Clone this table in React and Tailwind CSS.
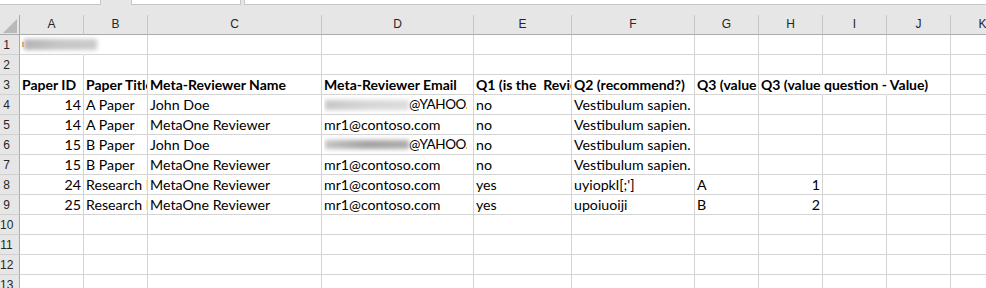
import React from "react";

const COLS = [
  { k: "A", w: "w-[64px]" },
  { k: "B", w: "w-[64px]" },
  { k: "C", w: "w-[174px]" },
  { k: "D", w: "w-[152px]" },
  { k: "E", w: "w-[98px]" },
  { k: "F", w: "w-[123px]" },
  { k: "G", w: "w-[64px]" },
  { k: "H", w: "w-[64px]" },
  { k: "I", w: "w-[64px]" },
  { k: "J", w: "w-[64px]" },
  { k: "K", w: "w-[64px]" },
];

function Blur({ w, tone }) {
  const cls =
    tone === "dark"
      ? "h-[9px] bg-gradient-to-r from-[#c4c4c4] via-[#a2a2a2] to-[#acacac]"
      : tone === "light"
      ? "h-[10px] bg-gradient-to-r from-[#c6c6c6] via-[#d6d6d6] to-[#dcdcdc]"
      : "h-[11px] bg-gradient-to-r from-[#b4b4b4] via-[#c6c6c6] to-[#cbcbcb]";
  return <div className={`${w} shrink-0 blur-[2px] ${cls}`} />;
}

function Cell({ w, children, right, bold, open, noRight }) {
  return (
    <div
      className={`${w} shrink-0 h-[20px] border-b border-r border-b-[#d4d4d4] ${
        noRight ? "border-r-white" : "border-r-[#d4d4d4]"
      } ${open ? "overflow-visible relative z-10" : "overflow-hidden"} whitespace-nowrap leading-[19px] ${
        right ? "text-right pr-[2px]" : "pl-[2px]"
      } ${bold ? "font-bold text-[14px]" : "text-[14.2px]"} text-black`}
    >
      {children}
    </div>
  );
}

const rows = [
  { n: 1, cells: { A: { open: true, noRight: true, v: "blob" } } },
  { n: 2, cells: {} },
  {
    n: 3,
    cells: {
      A: { bold: true, v: "Paper ID" },
      B: { bold: true, v: "Paper Title" },
      C: { bold: true, v: "Meta-Reviewer Name" },
      D: { bold: true, v: "Meta-Reviewer Email" },
      E: { bold: true, v: "Q1 (is the\u00a0\u00a0Reviewer)" },
      F: { bold: true, v: "Q2 (recommend?)" },
      G: { bold: true, v: "Q3 (value question)" },
      H: { bold: true, open: true, noRight: true, v: "Q3 (value question - Value)" },
      I: { noRight: true, v: "" },
    },
  },
  {
    n: 4,
    cells: {
      A: { right: true, v: "14" },
      B: { v: "A Paper" },
      C: { v: "John Doe" },
      D: { v: "yahoo-light" },
      E: { v: "no" },
      F: { v: "Vestibulum sapien." },
    },
  },
  {
    n: 5,
    cells: {
      A: { right: true, v: "14" },
      B: { v: "A Paper" },
      C: { v: "MetaOne Reviewer" },
      D: { v: "mr1@contoso.com" },
      E: { v: "no" },
      F: { v: "Vestibulum sapien." },
    },
  },
  {
    n: 6,
    cells: {
      A: { right: true, v: "15" },
      B: { v: "B Paper" },
      C: { v: "John Doe" },
      D: { v: "yahoo-dark" },
      E: { v: "no" },
      F: { v: "Vestibulum sapien." },
    },
  },
  {
    n: 7,
    cells: {
      A: { right: true, v: "15" },
      B: { v: "B Paper" },
      C: { v: "MetaOne Reviewer" },
      D: { v: "mr1@contoso.com" },
      E: { v: "no" },
      F: { v: "Vestibulum sapien." },
    },
  },
  {
    n: 8,
    cells: {
      A: { right: true, v: "24" },
      B: { v: "Research\u00a0Paper" },
      C: { v: "MetaOne Reviewer" },
      D: { v: "mr1@contoso.com" },
      E: { v: "yes" },
      F: { v: "uyiopkl[;']" },
      G: { v: "A" },
      H: { right: true, v: "1" },
    },
  },
  {
    n: 9,
    cells: {
      A: { right: true, v: "25" },
      B: { v: "Research\u00a0Paper" },
      C: { v: "MetaOne Reviewer" },
      D: { v: "mr1@contoso.com" },
      E: { v: "yes" },
      F: { v: "upoiuoiji" },
      G: { v: "B" },
      H: { right: true, v: "2" },
    },
  },
  { n: 10, cells: {} },
  { n: 11, cells: {} },
  { n: 12, cells: {} },
  { n: 13, cells: {} },
];

function renderValue(v) {
  if (v === "blob") {
    return (
      <div className="flex items-center h-[19px]">
        <div className="w-[2px] h-[5px] bg-[#f0a848] blur-[0.5px] shrink-0" />
        <Blur w="w-[73px]" tone="mid" />
      </div>
    );
  }
  if (v === "yahoo-light" || v === "yahoo-dark") {
    return (
      <div className="w-[143px] overflow-hidden flex items-center h-[19px]">
        <div className="w-[1px] shrink-0" />
        <Blur w="w-[84px]" tone={v === "yahoo-light" ? "light" : "dark"} />
        <span className="leading-[19px] self-end text-[13.5px] tracking-[-0.4px]">@YAHOO.COM</span>
      </div>
    );
  }
  return v;
}

export default function App() {
  return (
    <div className="w-[986px] h-[288px] overflow-hidden bg-[#e6e6e6] font-['Lato','Liberation_Sans',sans-serif]">
      <div className="flex h-[5px]">
        <div className="w-[101px] shrink-0 bg-white border-r border-b border-[#c6c6c6]" />
        <div className="ml-[30px] w-[110px] shrink-0 bg-white border-l border-r border-b border-[#c6c6c6]" />
        <div className="ml-[3px] flex-1 bg-white border-l border-b border-[#c6c6c6]" />
      </div>
      <div className="h-[10px]" />
      <div className="flex h-[20px]">
        <div className="w-[20px] shrink-0 h-[20px] border-r border-b border-[#ababab] flex items-end justify-end pr-[2px] pb-[1px]">
          <svg width="14" height="14" viewBox="0 0 14 14">
            <polygon points="14,0 14,14 0,14" fill="#b9b9b9" />
          </svg>
        </div>
        {COLS.map((c) => (
          <div
            key={c.k}
            className={`${c.w} shrink-0 h-[20px] border-r border-b border-r-[#c6c6c6] border-b-[#ababab] text-center text-[12px] leading-[19px] text-[#262626] font-['Liberation_Sans',sans-serif]`}
          >
            {c.k}
          </div>
        ))}
      </div>
      {rows.map((r) => (
        <div key={r.n} className="flex h-[20px]">
          <div className="w-[20px] shrink-0 h-[20px] border-r border-b border-r-[#ababab] border-b-[#d0d0d0] bg-[#e6e6e6] text-center text-[12px] leading-[20px] text-[#262626] font-['Liberation_Sans',sans-serif] pr-[6px]">
            {r.n}
          </div>
          {COLS.map((c) => {
            const d = r.cells[c.k] || {};
            return (
              <div key={c.k} className="bg-white flex">
                <Cell w={c.w} right={d.right} bold={d.bold} open={d.open} noRight={d.noRight}>
                  {d.v ? renderValue(d.v) : null}
                </Cell>
              </div>
            );
          })}
        </div>
      ))}
    </div>
  );
}
